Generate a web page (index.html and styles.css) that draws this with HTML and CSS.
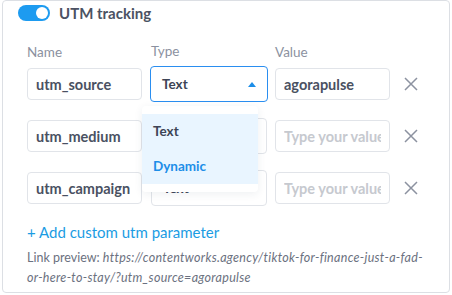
FILE: index.html
```html
<!DOCTYPE html>
<html lang="en">
<head>
    <meta charset="UTF-8">
    <meta name="viewport" content="width=device-width, initial-scale=1.0">
    <title>UTM tracking</title>
    <link rel="stylesheet" href="styles.css">
</head>
<body>
    <div class="card">
        <!-- header with switch -->
        <div class="card-head">
            <span class="toggle"><span class="knob"></span></span>
            <span class="title">UTM tracking</span>
        </div>

        <!-- column titles -->
        <div class="grid labels">
            <div class="label">Name</div>
            <div class="label label-type">Type</div>
            <div class="label">Value</div>
        </div>

        <!-- parameters -->
        <div class="grid params">
            <input class="field" type="text" value="utm_source">
            <div class="select-wrap">
                <div class="select focused">
                    <span>Text</span>
                    <span class="caret up"></span>
                </div>
                <ul class="menu">
                    <li class="option">Text</li>
                    <li class="option active">Dynamic</li>
                </ul>
            </div>
            <input class="field" type="text" value="agorapulse">
            <button class="remove" aria-label="Remove">
                <svg width="14" height="14" viewBox="0 0 14 14"><path d="M1 1L13 13M13 1L1 13" stroke="#8c92a0" stroke-width="1.5" fill="none"/></svg>
            </button>

            <input class="field" type="text" value="utm_medium">
            <div class="select-wrap">
                <div class="select">
                    <span></span>
                    <span class="caret"></span>
                </div>
            </div>
            <input class="field" type="text" placeholder="Type your value">
            <button class="remove" aria-label="Remove">
                <svg width="14" height="14" viewBox="0 0 14 14"><path d="M1 1L13 13M13 1L1 13" stroke="#8c92a0" stroke-width="1.5" fill="none"/></svg>
            </button>

            <input class="field" type="text" value="utm_campaign">
            <div class="select-wrap">
                <div class="select">
                    <span>Text</span>
                    <span class="caret"></span>
                </div>
            </div>
            <input class="field" type="text" placeholder="Type your value">
            <button class="remove" aria-label="Remove">
                <svg width="14" height="14" viewBox="0 0 14 14"><path d="M1 1L13 13M13 1L1 13" stroke="#8c92a0" stroke-width="1.5" fill="none"/></svg>
            </button>
        </div>

        <a class="add" href="#">+ Add custom utm parameter</a>

        <p class="preview"><span class="prefix">Link preview: </span>https://contentworks.agency/tiktok-for-finance-just-a-fad-or-here-to-stay/?utm_source=agorapulse</p>
    </div>
</body>
</html>
```

FILE: styles.css
```css
body {
    margin: 0;
    font-family: Lato, "Open Sans", sans-serif;
    background-color: #fff;
    color: #4a5162;
}
.card {
    box-sizing: border-box;
    width: 448px;
    height: 293px;
    margin-left: 2px;
    padding: 4px 15px 0 24px;
    border: 1px solid #dcdfe4;
    border-radius: 4px;
}
.card-head {
    display: flex;
    align-items: center;
    height: 16px;
    margin-left: -9px;
}
.toggle {
    position: relative;
    width: 32px;
    height: 16px;
    border-radius: 8px;
    background-color: #1d9bf0;
}
.knob {
    position: absolute;
    top: 2px;
    right: 2px;
    width: 12px;
    height: 12px;
    border-radius: 50%;
    background-color: #fff;
}
.title {
    margin-left: 9px;
    font-size: 15px;
    font-weight: bold;
    color: #4b5263;
}
.grid {
    display: grid;
    grid-template-columns: 116px 116px 115px 27px;
    column-gap: 8px;
    align-items: center;
}
.labels {
    height: 16px;
    margin-top: 23px;
}
.label {
    font-size: 13.5px;
    line-height: 16px;
    color: #8b91a0;
}
.label-type {
    margin-top: -3px;
}
.params {
    grid-auto-rows: 36px;
    row-gap: 16px;
    margin-top: 6px;
}
.field {
    box-sizing: border-box;
    width: 115px;
    height: 32px;
    padding: 0 8px;
    border: 1px solid #e1e4e9;
    border-radius: 4px;
    background-color: #fff;
    font-family: inherit;
    font-size: 14.5px;
    font-weight: bold;
    color: #4a5162;
    outline: none;
}
.field::placeholder {
    color: #c6c9cf;
}
.select-wrap {
    position: relative;
    height: 36px;
}
.select {
    box-sizing: border-box;
    display: flex;
    align-items: center;
    justify-content: space-between;
    height: 36px;
    padding: 0 11px;
    border: 1px solid #e1e4e9;
    border-radius: 4px;
    background-color: #fff;
    font-size: 13.5px;
    font-weight: bold;
    color: #3d4455;
}
.select.focused {
    margin: 0 -1px;
    border-color: #2a8ef0;
}
.caret {
    width: 0;
    height: 0;
    border-left: 4.5px solid transparent;
    border-right: 4.5px solid transparent;
    border-top: 5px solid #8c92a0;
}
.caret.up {
    border-top: 0;
    border-bottom: 5px solid #1d8ee8;
}
.menu {
    position: absolute;
    z-index: 2;
    top: 40px;
    left: -9px;
    width: 116px;
    margin: 0;
    padding: 8px 0;
    list-style: none;
    background-color: #fff;
    border-radius: 4px;
    box-shadow: 0 2px 8px rgba(40, 60, 90, 0.08);
}
.option {
    height: 35px;
    line-height: 35px;
    padding-left: 11px;
    background-color: #e9f5ff;
    font-size: 13.5px;
    font-weight: bold;
    color: #3d4455;
}
.option.active {
    color: #1d8ee8;
}
.remove {
    display: flex;
    margin-left: 6px;
    padding: 0;
    border: 0;
    background: none;
}
.add {
    display: block;
    margin-top: 16px;
    font-size: 15px;
    line-height: 20px;
    color: #1b9ce3;
    text-decoration: none;
}
.preview {
    width: 402px;
    margin: 6px 0 0;
    font-size: 12.5px;
    font-style: italic;
    line-height: 19.5px;
    letter-spacing: 0.3px;
    color: #6b7180;
}
.prefix {
    font-style: normal;
    letter-spacing: 0;
}
```
